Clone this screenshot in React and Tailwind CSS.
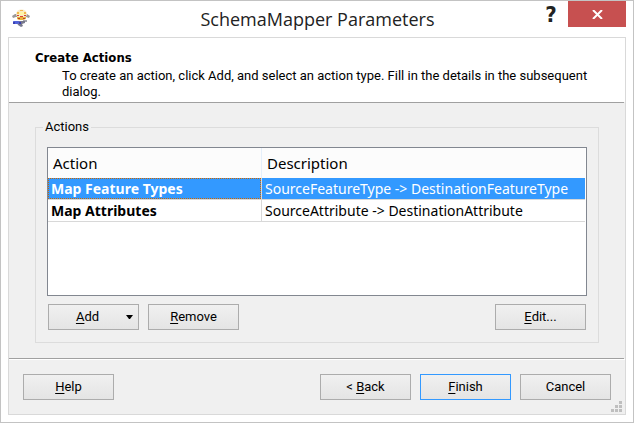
const actions = [
  { name: 'Map Feature Types', description: 'SourceFeatureType -> DestinationFeatureType', selected: true },
  { name: 'Map Attributes', description: 'SourceAttribute -> DestinationAttribute', selected: false }
]

const AppIcon = () => (
  <svg width="20" height="20" viewBox="0 0 20 20" aria-hidden="true">
    <path d="M1 7 4 5h12l3 2-1 2-3-1H5L2 9z" fill="#9b9999" />
    <ellipse cx="10.500" cy="5" rx="5.500" ry="4.500" fill="#f8e9c4" />
    <path d="M6 3h2v2H6zM13 3h2v2h-2zM9 1h3v1H9z" fill="#f2b84b" />
    <path d="M8 3h5v3H8z" fill="#fff4a8" />
    <path d="M6 6h2v1H6zM13 6h2v1h-2zM9 7h3v1H9z" fill="#d9412f" />
    <path d="M6 8h9v2l-3 1H8L6 10z" fill="#e9b33d" />
    <path d="M7 9h2v1H7zM12 9h2v1h-2z" fill="#b73a35" />
    <path d="M12 11h4v2h-4z" fill="#a3a4ad" />
    <path d="M6 12h8v2l-3 1 1 2-2 1-3-2-1-2z" fill="#77788c" />
    <path d="M2 12h5l2 1-2 2H3z" fill="#5162d8" />
    <path d="M2 13h2v2H2zM8 13h2v2H8z" fill="#3940b4" />
  </svg>
)

const Button = ({ children, primary }) => (
  <button
    type="button"
    className={`relative h-[26px] w-[91px] border bg-linear-to-b from-[#f0f0f0] to-[#e4e4e4] text-center leading-6 ${
      primary ? 'border-[#3399ff]' : 'border-[#acacac]'
    }`}
  >
    {children}
  </button>
)

const Key = ({ children }) => <span className="underline underline-offset-2">{children}</span>

const TitleBar = () => (
  <header className="flex h-9 items-start pr-[7px] pl-[10px]">
    <div className="w-[104px] pt-2">
      <AppIcon />
    </div>
    <h1 className="flex-1 pt-1 text-center font-['Open_Sans','Noto_Sans',sans-serif] text-[18px] leading-7 text-[#222]">
      SchemaMapper Parameters
    </h1>
    <button type="button" aria-label="Help" className="w-12 pt-[2px] pl-[14px] text-center font-['DejaVu_Sans_Condensed','DejaVu_Sans',sans-serif] text-[22px] leading-6 font-bold text-[#222]">
      ?
    </button>
    <button type="button" aria-label="Close" className="flex h-[26px] w-[58px] items-center justify-center bg-[#c75050]">
      <svg width="11" height="9" viewBox="0 0 11 9" aria-hidden="true">
        <path d="M1 0 10 9M10 0 1 9" stroke="#fff" strokeWidth="2" />
      </svg>
    </button>
  </header>
)

const ActionsTable = () => (
  <div className="min-h-[149px] flex-1 border border-[#828790] bg-white pr-px">
    <table className="w-full table-fixed border-separate border-spacing-0 text-left font-['Noto_Sans','Open_Sans',sans-serif] text-[14px]">
      <thead>
        <tr className="h-[30px] bg-[#fcfcfc] text-[15px]">
          <th className="w-[214px] border-r border-[#e5effa] py-0 pl-[5px] font-normal">Action</th>
          <th className="py-0 pl-[5px] font-normal">Description</th>
        </tr>
      </thead>
      <tbody>
        {actions.map((action) => (
          <tr key={action.name} className={action.selected ? 'bg-[#3399ff] text-white' : ''}>
            <td className="border-r border-b border-[#d8d8d8] p-0 font-bold">
              <div
                className={`h-[21px] pl-[3px] leading-[21px] ${
                  action.selected ? 'outline outline-dotted -outline-offset-1 outline-[#cc6600]' : ''
                }`}
              >
                {action.name}
              </div>
            </td>
            <td className="border-b border-[#d8d8d8] py-0 pr-0 pl-[3px] leading-[21px] whitespace-nowrap">
              {action.description}
            </td>
          </tr>
        ))}
      </tbody>
    </table>
  </div>
)

const SizeGrip = () => (
  <svg className="absolute right-[3px] bottom-[2px]" width="11" height="11" viewBox="0 0 11 11" aria-hidden="true">
    <path d="M8 0h3v3H8zM4 4h3v3H4zM8 4h3v3H8zM0 8h3v3H0zM4 8h3v3H4zM8 8h3v3H8z" fill="#bfbfbf" />
  </svg>
)

export default function App() {
  return (
    <div className="flex min-h-screen flex-col border border-[#c3c3c3] bg-white px-[7px] pb-[7px] font-['Roboto','DejaVu_Sans_Condensed',sans-serif] text-[13px] text-black">
      <div className="-mx-[7px]">
        <TitleBar />
      </div>

      <main className="relative flex flex-1 flex-col border border-[#d9d9d9] bg-[#f0f0f0]">
        <section className="h-16 bg-white pt-3 pr-8 pl-[26px] leading-4">
          <h2 className="font-['DejaVu_Sans_Condensed','DejaVu_Sans',sans-serif] font-bold">Create Actions</h2>
          <p className="mt-0.5 pl-[27px]">
            To create an action, click Add, and select an action type. Fill in the details in the subsequent dialog.
          </p>
        </section>
        <hr className="mr-px border-[#a0a0a0]" />

        <fieldset className="mx-[26px] mt-4 mb-[15px] flex-1 border border-[#dcdcdc] px-[11px] pb-3">
          <legend className="-ml-1 px-[2px] leading-4">Actions</legend>
          <div className="flex flex-col pt-3">
            <ActionsTable />
            <div className="mt-2 flex gap-[9px] px-px">
              <Button>
                <span className="pr-3">
                  <Key>A</Key>dd
                </span>
                <svg className="absolute top-[10px] right-[5px]" width="7" height="4" viewBox="0 0 7 4" aria-hidden="true">
                  <path d="M0 0h7L4 4H3z" />
                </svg>
              </Button>
              <Button>
                <Key>R</Key>emove
              </Button>
              <div className="ml-auto">
                <Button>
                  <Key>E</Key>dit...
                </Button>
              </div>
            </div>
          </div>
        </fieldset>

        <hr className="mr-px border-[#a0a0a0]" />
        <footer className="flex gap-[9px] border-t border-white px-[14px] py-[14px]">
          <Button>
            <Key>H</Key>elp
          </Button>
          <div className="ml-auto flex gap-[9px]">
            <Button>
              &lt; <Key>B</Key>ack
            </Button>
            <Button primary>
              <Key>F</Key>inish
            </Button>
            <Button>Cancel</Button>
          </div>
        </footer>
        <SizeGrip />
      </main>
    </div>
  )
}
